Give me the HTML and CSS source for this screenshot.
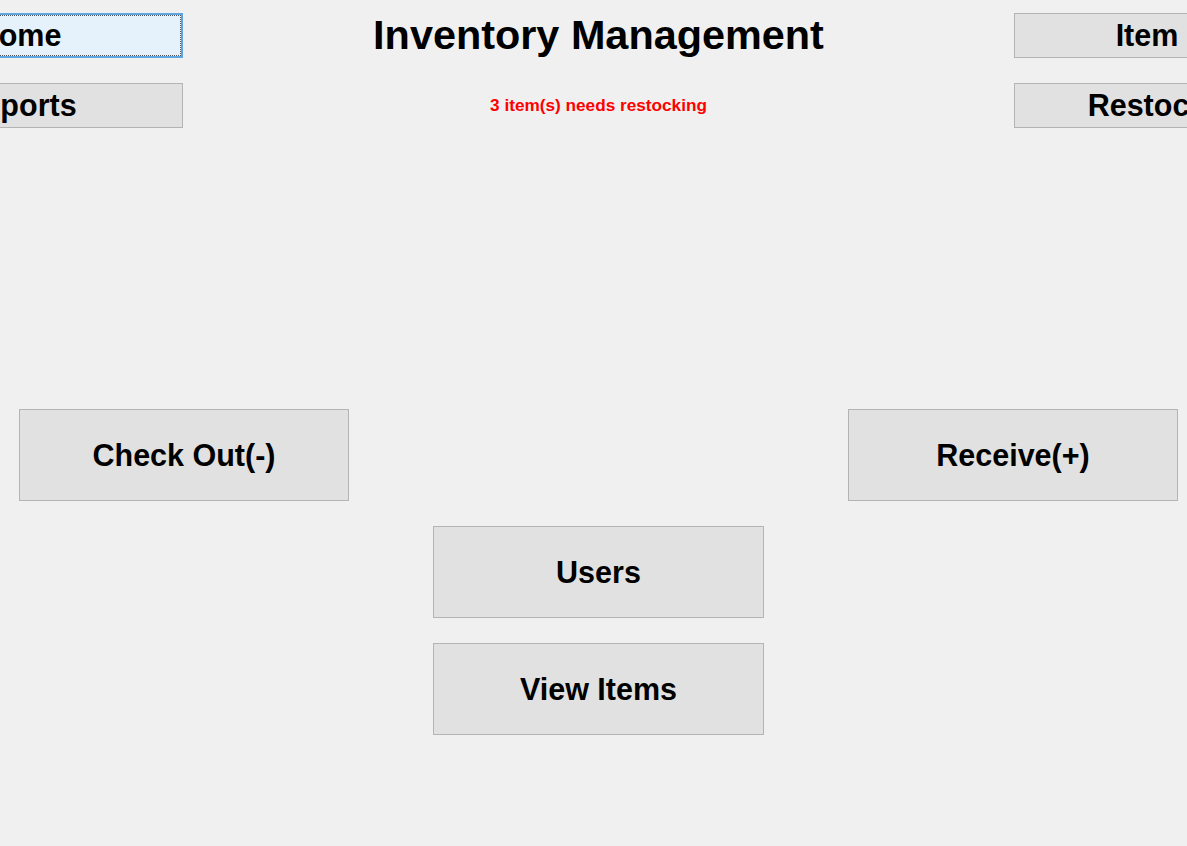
FILE: index.html
```html
<!DOCTYPE html>
<html lang="en">
<head>
<meta charset="utf-8">
<title>Inventory Management</title>
<link rel="stylesheet" href="styles.css">
</head>
<body>
<div class="page">
  <header class="top">
    <nav class="nav nav-left">
      <button class="btn btn-nav btn-focus">Home</button>
      <button class="btn btn-nav">Reports</button>
    </nav>
    <div class="heading">
      <h1 class="title">Inventory Management</h1>
      <p class="alert">3 item(s) needs restocking</p>
    </div>
    <nav class="nav nav-right">
      <button class="btn btn-nav">Item</button>
      <button class="btn btn-nav">Restock</button>
    </nav>
  </header>
  <main class="actions">
    <button class="btn btn-big pos-left">Check Out(-)</button>
    <button class="btn btn-big pos-right">Receive(+)</button>
    <button class="btn btn-big pos-mid-1">Users</button>
    <button class="btn btn-big pos-mid-2">View Items</button>
  </main>
</div>
</body>
</html>
```

FILE: styles.css
```css
html, body {
  margin: 0;
  padding: 0;
  overflow: hidden;
  background: #f0f0f0;
}

.page {
  width: 1187px;
  height: 846px;
  overflow: hidden;
  background: #f0f0f0;
  font-family: "Liberation Sans", Arial, sans-serif;
  color: #000;
}

.top {
  display: flex;
  align-items: flex-start;
  padding-top: 13px;
  height: 115px;
}

.nav {
  display: flex;
  flex-direction: column;
  gap: 25px;
  flex-shrink: 0;
}

.nav-left {
  width: 328px;
  margin-left: -145px;
}

.nav-right {
  width: 266px;
  margin-right: -93px;
}

.heading {
  flex: 1 1 auto;
  min-width: 0;
  text-align: center;
}

.title {
  margin: 0;
  font-size: 41.4px;
  line-height: 45px;
  font-weight: bold;
}

.alert {
  margin: 37px 0 0;
  font-size: 17.2px;
  line-height: 20px;
  font-weight: bold;
  color: #ff0000;
}

.btn {
  box-sizing: border-box;
  display: flex;
  align-items: center;
  justify-content: center;
  margin: 0;
  padding: 0;
  background: #e1e1e1;
  border: 1px solid #b4b4b4;
  border-radius: 0;
  font-family: "Liberation Sans", Arial, sans-serif;
  font-weight: bold;
  font-size: 30.5px;
  color: #000;
  white-space: nowrap;
  overflow: hidden;
}

.btn-nav {
  width: 100%;
  height: 45px;
}

.btn-focus {
  background: #e5f1fb;
  border: 2px solid #5ea6e2;
  outline: 1px dotted #555;
  outline-offset: -3px;
}

.actions {
  display: grid;
  grid-template-columns: 330px 331px 330px;
  grid-template-rows: 92px 92px 92px;
  column-gap: 84px;
  row-gap: 25px;
  padding-left: 19px;
  margin-top: 281px;
}

.btn-big {
  width: 100%;
  height: 100%;
}

.pos-left { grid-column: 1; grid-row: 1; }
.pos-right { grid-column: 3; grid-row: 1; }
.pos-mid-1 { grid-column: 2; grid-row: 2; }
.pos-mid-2 { grid-column: 2; grid-row: 3; }
```
